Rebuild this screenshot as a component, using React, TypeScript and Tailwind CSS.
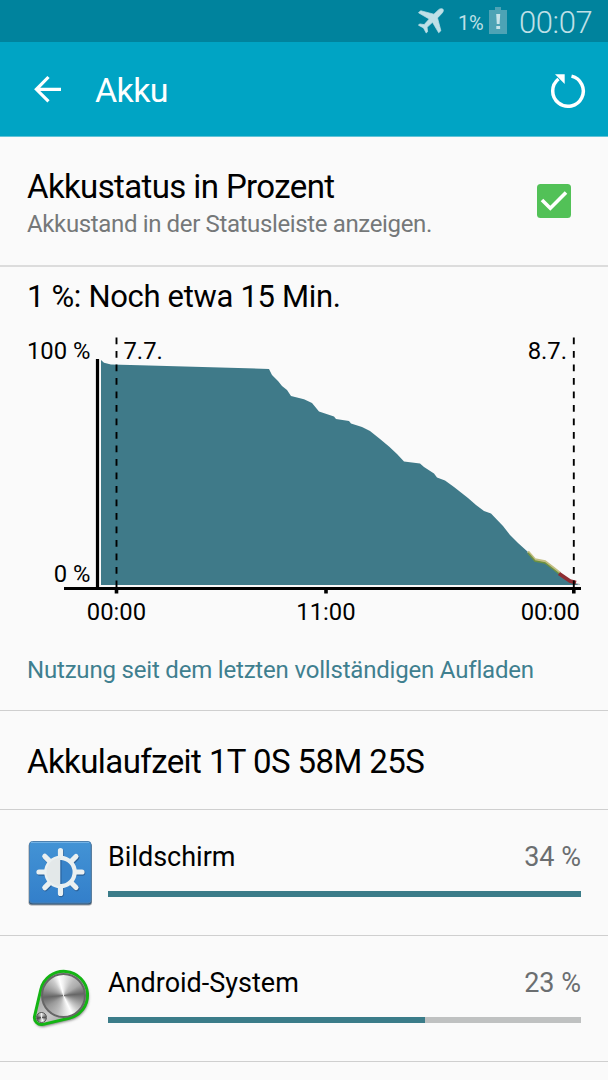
const apps = [
  { name: "Bildschirm", percent: 34, width: 100, Icon: DisplayIcon },
  { name: "Android-System", percent: 23, width: 67.1, Icon: SystemIcon },
];

const level =
  "101,360 104,362.7 111,364.5 140,365.2 269,369 272,375 278,381 282,386 287,390 291,396 304,399.3 312,403 319,411.5 334,416.5 336,419 349,421 351,423.5 362,427 370,431 380,439 389,446.5 397,454 404,461.5 420,463.5 424,467 434,473.5 437,477.5 445,480.5 454,487 468,498 476,505 484,511 491,513.5 503,526 510,535 518,543 528,552 535,560 545,562 553,568 560,573.5 567,579 575,582.5 579,585";

function DisplayIcon() {
  return (
    <svg width="66" height="68" viewBox="0 0 66 68">
      <defs>
        <linearGradient id="tile" x1="0" y1="0" x2="0" y2="1">
          <stop offset="0" stopColor="#4393d5" />
          <stop offset="1" stopColor="#337fca" />
        </linearGradient>
      </defs>
      <rect x="1.5" y="3" width="63.5" height="62.5" rx="3" fill="#9b9fa3" />
      <rect x="2" y="3" width="62.5" height="61.5" rx="3" fill="#34597d" />
      <rect x="2.5" y="1.5" width="61.5" height="61.5" rx="3" fill="url(#tile)" stroke="#4d81b0" />
      <path d="M4 2.5h58" stroke="#73b3e6" />
      <g transform="translate(33.5 32)">
        <g stroke="#2b6199" strokeWidth="5.4" strokeLinecap="round" transform="translate(.6 1)">
          <path d="M0-21.5v8M0 13.5v8M-21.5 0h8M13.5 0h8M-15.7-15.7l5 5M10.5 10.5l5 5M-15.7 15.7l5-5M10.5-10.5l5-5" />
        </g>
        <g stroke="#eaf0f1" strokeWidth="5.2" strokeLinecap="round">
          <path d="M0-21.5v8M0 13.5v8M-21.5 0h8M13.5 0h8M-15.7-15.7l5 5M10.5 10.5l5 5M-15.7 15.7l5-5M10.5-10.5l5-5" />
        </g>
        <circle r="14.2" fill="#3883c9" stroke="#eaf0f1" strokeWidth="4.2" />
        <path d="M0-14a14 14 0 0 0 0 28z" fill="#e3e8e9" />
        <path d="M.5-12v24" stroke="#28609a" />
      </g>
    </svg>
  );
}

function SystemIcon() {
  return (
    <svg width="66" height="68" viewBox="0 0 66 68">
      <defs>
        <linearGradient id="plate" x1="0" y1="0" x2="1" y2="1">
          <stop offset="0" stopColor="#858585" />
          <stop offset=".55" stopColor="#c9c9c9" />
          <stop offset="1" stopColor="#777" />
        </linearGradient>
        <filter id="soft" x="-20%" y="-20%" width="140%" height="140%">
          <feGaussianBlur stdDeviation="1.6" />
        </filter>
      </defs>
      <path
        d="M13.8 23.5A23.7 23.7 0 1 1 42 52.2L16 58.4A7 7 0 0 1 7.6 50z"
        transform="translate(.8 2)"
        fill="#666"
        filter="url(#soft)"
      />
      <path
        d="M13.8 23.5A23.7 23.7 0 1 1 42 52.2L16 58.4A7 7 0 0 1 7.6 50z"
        fill="url(#plate)"
        stroke="#14b514"
        strokeWidth="3"
      />
      <foreignObject x="14" y="7" width="46" height="46">
        <div className="h-[45px] w-[45px] rounded-full border-2 border-[#666] bg-[conic-gradient(from_0deg,#eee,#bbb_35deg,#aaa_55deg,#666_85deg,#999_110deg,#ccc_135deg,#fff_155deg,#bbb_200deg,#999_235deg,#666_265deg,#999_290deg,#ccc_325deg,#fff_345deg,#eee)]" />
      </foreignObject>
      <foreignObject x="9" y="46" width="12" height="12">
        <div className="h-[11px] w-[11px] rounded-full border border-[#555] bg-[conic-gradient(#eee,#555_90deg,#fff_160deg,#444_260deg,#eee)]" />
      </foreignObject>
    </svg>
  );
}

function LevelChart() {
  return (
    <svg className="block" width="608" height="300" viewBox="0 330 608 300">
      <polygon points={`${level} 101,585`} fill="#3f7a89" />
      <polyline
        points="528,551.5 535,559.5 545,561.5 553,567.5 560,573"
        fill="none"
        stroke="#c3be82"
        strokeWidth="2.5"
      />
      <polyline
        points="528,553 535,561 545,563 553,569 560,574.5"
        fill="none"
        stroke="#6d9140"
        strokeWidth="1.5"
      />
      <polyline points="559,573.5 567,579 570,581 576,582.7" fill="none" stroke="#8e2d32" strokeWidth="3.8" />
      <path d="M576 583.5l4 1" stroke="#bbb" />
      <path d="M97.5 359v230M64 588.5h517" stroke="#000" strokeWidth="3.2" />
      <path d="M116.5 590v3.5M326 590v3.5M573.8 590v3.5" stroke="#000" strokeWidth="3.6" />
      <path
        d="M116.5 337.5V587M573.8 337.5V587"
        stroke="#000"
        strokeWidth="1.9"
        strokeDasharray="6.75 6.75"
      />
      <g fontSize="23.8" fill="#000">
        <text x="27" y="359">100 %</text>
        <text x="123.5" y="359">7.7.</text>
        <text x="567" y="359" textAnchor="end">8.7.</text>
        <text x="90.5" y="582" textAnchor="end">0 %</text>
        <text x="116.5" y="620" textAnchor="middle">00:00</text>
        <text x="326" y="620" textAnchor="middle">11:00</text>
        <text x="580" y="620" textAnchor="end">00:00</text>
      </g>
    </svg>
  );
}

export default function App() {
  return (
    <div className="h-[1080px] w-[608px] overflow-hidden bg-[#fafafa] font-[Roboto,sans-serif] text-black">
      {/* Status bar */}
      <div className="flex h-[42px] items-center justify-end bg-[#00839d] pr-[16px] text-[#bfe0e7]">
        <svg className="mr-[14px]" width="26" height="26" viewBox="0 0 26 26" fill="currentColor" stroke="currentColor" strokeWidth="0.7">
          <path d="M25 1.2c-1.2-1-3.2-.6-4.6.7l-4.5 4.3L2.6 2.7.5 4.8l10.7 6.2-5 5.6-4.6-.7-1.2 1.3 5.1 2.7 2.7 5.1 1.4-1.3-.5-4.4 5.4-5 6.2 10.5 2.2-2.1-3.4-12.8 4.3-4.5C25.1 4.2 25.9 2.1 25 1.2z" />
        </svg>
        <span className="w-[27px] whitespace-nowrap pt-[3px] text-[20px] leading-[42px] tracking-[-0.3px]">1%</span>
        <svg className="mb-[1px] ml-[4px]" width="18" height="27" viewBox="0 0 18 27">
          <path d="M6 0h6v3h6v24H0V3h6z" fill="#4ea3b5" />
          <path d="M7.2 7h4l-.6 10H7.8zM7.3 19h3.8v3H7.3z" fill="#c8e4ea" />
        </svg>
        <span className="ml-[12px] w-[73px] whitespace-nowrap pt-[3px] text-[31px] font-light leading-[42px] tracking-[-0.4px]">
          00:07
        </span>
      </div>

      {/* Action bar */}
      <div className="flex h-[95px] items-center border-b border-[#62c3d7] bg-[#00a4c4] pl-[34px] pr-[22px] text-white">
        <svg width="27" height="28" viewBox="0 0 27 28" fill="none" stroke="currentColor" strokeWidth="3.2">
          <path d="M14.5 2L2.4 14.3l12.1 12M2 14.3h25" />
        </svg>
        <h1 className="ml-[34px] flex-1 pt-[2px] text-[34px] leading-[40px] tracking-[-0.6px]">Akku</h1>
        <svg className="mt-[4px]" width="36" height="36" viewBox="0 0 36 36">
          <path d="M21.5 3.1A15.3 15.3 0 1 1 8.5 6" fill="none" stroke="currentColor" strokeWidth="3.5" />
          <path d="M5 1.3h9.7V11z" fill="currentColor" />
        </svg>
      </div>

      {/* Percentage setting */}
      <div className="flex h-[130px] items-center border-b-2 border-[#dcdcdc] pl-[27px] pr-[37px]">
        <div className="flex-1 pt-[7px]">
          <div className="text-[33px] leading-[40px] tracking-[-0.62px]">Akkustatus in Prozent</div>
          <div className="text-[24px] leading-[35px] tracking-[-0.36px] text-[#757879]">
            Akkustand in der Statusleiste anzeigen.
          </div>
        </div>
        <svg width="34" height="34" viewBox="0 0 34 34">
          <rect width="34" height="34" rx="3.5" fill="#52c157" />
          <path d="M5 16l8.3 8.2L29 8.5" fill="none" stroke="#fff" strokeWidth="3.6" />
        </svg>
      </div>

      {/* Battery level */}
      <div className="h-[444px] border-b border-[#cfcfcf]">
        <div className="h-[63px] pl-[27px] pt-[10px] text-[31px] leading-[40px] tracking-[-0.32px]">
          1 %: Noch etwa 15 Min.
        </div>
        <LevelChart />
        <div className="pl-[27px] pt-[23px] text-[24px] leading-[34px] tracking-[-0.19px] text-[#3f7f8f]">
          Nutzung seit dem letzten vollständigen Aufladen
        </div>
      </div>

      <div className="flex h-[99px] items-center border-b border-[#cfcfcf] px-[27px] pt-[4px] text-[33px] tracking-[-0.58px]">
        Akkulaufzeit 1T 0S 58M 25S
      </div>

      {/* Usage per app */}
      {apps.map(({ name, percent, width, Icon }) => (
        <div key={name} className="flex h-[126px] border-b border-[#cfcfcf] pl-[27px] pr-[27px] pt-[30px]">
          <Icon />
          <div className="ml-[15px] flex-1">
            <div className="flex h-[51px] justify-between text-[27px] leading-[34px]">
              <span>{name}</span>
              <span className="text-[#6b6e70]">{percent} %</span>
            </div>
            <div className="h-[6px] bg-[#bfc1c1]">
              <div className="h-full bg-[#3b7c89]" style={{ width: `${width}%` }} />
            </div>
          </div>
        </div>
      ))}
    </div>
  );
}
